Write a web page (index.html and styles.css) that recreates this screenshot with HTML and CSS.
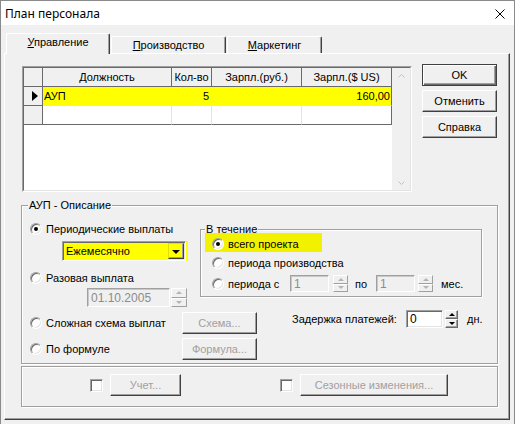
FILE: index.html
```html
<!DOCTYPE html>
<html lang="ru">
<head>
<meta charset="utf-8">
<title>План персонала</title>
<link rel="stylesheet" href="styles.css">
</head>
<body>
<div class="window">
  <div class="titlebar">
    <span class="title">План персонала</span>
    <svg class="close" width="10" height="10" viewBox="0 0 10 10"><path d="M0.5 0.5 L9.5 9.5 M9.5 0.5 L0.5 9.5" stroke="#000" stroke-width="1" fill="none"/></svg>
  </div>
  <div class="tabs">
    <div class="tab active t1"><span><u>У</u>правление</span></div>
    <div class="tab t2"><span><u>П</u>роизводство</span></div>
    <div class="tab t3"><span><u>М</u>аркетинг</span></div>
  </div>
  <div class="panel">
    <div class="toprow">
      <div class="grid">
        <div class="grid-in">
          <div class="grid-main">
            <div class="grow head">
              <div class="cell c0 ind"></div>
              <div class="cell c1 hc">Должность</div>
              <div class="cell c2 hc">Кол-во</div>
              <div class="cell c3 hc">Зарпл.(руб.)</div>
              <div class="cell c4 hc">Зарпл.($ US)</div>
            </div>
            <div class="grow sel">
              <div class="cell c0 ind"><span class="tri"></span></div>
              <div class="cell c1 dc">АУП</div>
              <div class="cell c2 dc num">5</div>
              <div class="cell c3 dc num"></div>
              <div class="cell c4 dc num last">160,00</div>
            </div>
            <div class="grow lastrow">
              <div class="cell c0 ind"></div>
              <div class="cell c1 dc"></div>
              <div class="cell c2 dc"></div>
              <div class="cell c3 dc"></div>
              <div class="cell c4 dc last"></div>
            </div>
          </div>
          <div class="vscroll">
            <svg width="7" height="4" viewBox="0 0 7 4"><polyline points="0.5,3.5 3.5,0.5 6.5,3.5" fill="none" stroke="#c2c2c2"/></svg>
            <svg width="7" height="4" viewBox="0 0 7 4"><polyline points="0.5,0.5 3.5,3.5 6.5,0.5" fill="none" stroke="#c2c2c2"/></svg>
          </div>
        </div>
      </div>
      <div class="buttons">
        <div class="btn def">OK</div>
        <div class="btn">Отменить</div>
        <div class="btn">Справка</div>
      </div>
    </div>

    <div class="group g1">
      <span class="glabel">АУП - Описание</span>
      <div class="rowA">
        <div class="leftA">
          <div class="ropt"><span class="radio on"></span><span>Периодические выплаты</span></div>
          <div class="combo"><span class="ctext">Ежемесячно</span><span class="cbtn"></span></div>
          <div class="ropt r2"><span class="radio"></span><span>Разовая выплата</span></div>
          <div class="daterow">
            <div class="field dis datef">01.10.2005</div>
            <div class="spin dis sp-date"><span class="sbtn up"></span><span class="sbtn down"></span></div>
          </div>
        </div>
        <div class="group during">
          <span class="glabel gl2">В течение</span>
          <div class="ropt hl"><span class="radio on"></span><span>всего проекта</span></div>
          <div class="ropt d2"><span class="radio"></span><span>периода производства</span></div>
          <div class="ropt d3">
            <span class="radio"></span><span class="plabel">периода с</span>
            <div class="field dis sf">1</div>
            <div class="spin dis sp-s1"><span class="sbtn up"></span><span class="sbtn down"></span></div>
            <span class="po">по</span>
            <div class="field dis sf">1</div>
            <div class="spin dis sp-s2"><span class="sbtn up"></span><span class="sbtn down"></span></div>
            <span class="mes">мес.</span>
          </div>
        </div>
      </div>
      <div class="rowB">
        <div class="leftB">
          <div class="brow b1"><div class="ropt wl"><span class="radio"></span><span>Сложная схема выплат</span></div><div class="btn dis">Схема...</div></div>
          <div class="brow b2"><div class="ropt wl"><span class="radio"></span><span>По формуле</span></div><div class="btn dis">Формула...</div></div>
        </div>
        <div class="delay">
          <span class="dlabel">Задержка платежей:</span>
          <div class="field df">0</div>
          <div class="spin sp-d"><span class="sbtn up"></span><span class="sbtn down"></span></div>
          <span class="dn">дн.</span>
        </div>
      </div>
    </div>

    <div class="group g2">
      <span class="check ck1"></span>
      <div class="btn dis b-uchet">Учет...</div>
      <span class="check ck2"></span>
      <div class="btn dis b-season">Сезонные изменения...</div>
    </div>
  </div>
</div>
</body>
</html>
```

FILE: styles.css
```css
* { box-sizing: border-box; }
html, body { margin: 0; padding: 0; }
body {
  background: #f0f0f0;
  font-family: "Liberation Sans", Arial, sans-serif;
  font-size: 11px;
  color: #000;
}
.window {
  width: 515px;
  height: 424px;
  border: 1px solid #8a8a8a;
  border-bottom: none;
  background: #f0f0f0;
  overflow: hidden;
}
.titlebar {
  height: 24px;
  background: #fff;
  display: flex;
  justify-content: space-between;
  align-items: flex-start;
}
.title {
  font-family: "Noto Sans", "Segoe UI", sans-serif;
  font-size: 12px;
  line-height: 17px;
  margin: 4px 0 0 4px;
}
.close { margin: 8px 9px 0 0; }

/* tabs */
.tabs {
  display: flex;
  align-items: flex-end;
  height: 20px;
  margin-top: 8px;
  padding-left: 5px;
}
.tab {
  height: 17px;
  margin-left: 1px;
  border-top: 1px solid #fff;
  border-left: 1px solid #fff;
  border-right: 1px solid #404040;
  box-shadow: inset -1px 0 #a0a0a0;
  border-radius: 2px 2px 0 0;
  display: flex;
  align-items: center;
  justify-content: center;
  line-height: 13px;
}
.tab u { text-underline-offset: 1px; }
.tab.t1 { width: 104px; margin-left: 0; }
.tab.t2 { width: 115px; }
.tab.t3 { width: 95px; }
.tab.active {
  height: 21px;
  margin-bottom: -1px;
  padding-bottom: 3px;
  background: #f0f0f0;
  position: relative;
  z-index: 1;
}

/* panel */
.panel {
  margin-left: 3px;
  width: 506px;
  height: 367px;
  border-top: 1px solid #fff;
  border-left: 1px solid #fff;
  border-right: 1px solid #404040;
  border-bottom: 1px solid #404040;
  box-shadow: inset -1px -1px #a0a0a0;
}
.toprow {
  display: flex;
  align-items: flex-start;
  margin: 10px 0 0 17px;
}

/* grid */
.grid {
  margin-top: 2px;
  width: 390px;
  height: 126px;
  border: 1px solid;
  border-color: #a0a0a0 #fff #fff #a0a0a0;
}
.grid-in {
  height: 100%;
  border: 1px solid;
  border-color: #696969 #e3e3e3 #e3e3e3 #696969;
  background: #fff;
  display: flex;
}
.grid-main { width: 368px; }
.grow { display: flex; height: 19px; }
.cell {
  height: 19px;
  border-right: 1px solid #e4e4e4;
  border-bottom: 1px solid #e4e4e4;
  display: flex;
  align-items: center;
  white-space: nowrap;
  overflow: hidden;
}
.c0 { width: 19px; }
.c1 { width: 129px; }
.c2 { width: 40px; }
.c3 { width: 90px; }
.c4 { width: 90px; }
.ind {
  background: #f0f0f0;
  border-right-color: #6a6a6a;
  border-bottom-color: #6a6a6a;
  justify-content: center;
}
.hc {
  background: #f0f0f0;
  border-right-color: #6a6a6a;
  border-bottom-color: #6a6a6a;
  justify-content: center;
}
.dc { padding-left: 1px; }
.num { justify-content: flex-end; padding-right: 2px; }
.c4.num { padding-right: 1px; }
.last { border-right-color: #6a6a6a; }
.sel .dc { background: #ffff00; border-color: #ffff00; }
.sel .c4 { border-right-color: #6a6a6a; }
.lastrow .cell { border-bottom-color: #6a6a6a; }
.tri {
  width: 0; height: 0;
  margin-left: 3px;
  border-left: 6px solid #000;
  border-top: 5px solid transparent;
  border-bottom: 5px solid transparent;
}
.vscroll {
  flex: 1;
  background: #f0f0f0;
  display: flex;
  flex-direction: column;
  justify-content: space-between;
  align-items: center;
  padding: 6px 0 5px 0;
}

/* buttons */
.buttons {
  display: flex;
  flex-direction: column;
  gap: 4px;
  margin-left: 10px;
}
.btn {
  width: 75px;
  height: 22px;
  background: #f0f0f0;
  border: 1px solid;
  border-color: #fff #404040 #404040 #fff;
  box-shadow: inset -1px -1px #a0a0a0;
  display: flex;
  align-items: center;
  justify-content: center;
  white-space: nowrap;
}
.btn.def {
  border: 1px solid #404040;
  box-shadow: inset 1px 1px #fff, inset -1px -1px #696969, inset -2px -2px #a0a0a0;
}
.btn.dis { color: #a0a0a0; }

/* groups */
.group {
  border: 1px solid #a0a0a0;
  box-shadow: 1px 1px 0 #fff, inset 1px 1px 0 #fff;
  display: flex;
  flex-direction: column;
}
.glabel {
  align-self: flex-start;
  height: 13px;
  line-height: 13px;
  margin: -7px 0 0 6px;
  padding: 0 1px;
  background: #f0f0f0;
}
.g1 {
  margin: 13px 0 0 16px;
  width: 477px;
  padding-bottom: 3px;
}
.rowA { display: flex; align-items: flex-start; margin-top: 9px; }
.leftA { width: 170px; margin-left: 8px; display: flex; flex-direction: column; flex: none; }
.ropt {
  display: flex;
  align-items: center;
  gap: 4px;
  height: 16px;
  white-space: nowrap;
}
.radio {
  width: 12px;
  height: 12px;
  flex: none;
  border-radius: 50%;
  background: #fff;
  border: 1px solid;
  border-color: #a0a0a0 #fff #fff #a0a0a0;
  box-shadow: inset 1px 1px #696969, inset -1px -1px #e3e3e3;
  display: flex;
  align-items: center;
  justify-content: center;
}
.radio.on::after {
  content: "";
  width: 4px;
  height: 4px;
  border-radius: 50%;
  background: #000;
}
.combo {
  margin: 4px 0 0 32px;
  width: 124px;
  height: 20px;
  background: #ffff00;
  border: 1px solid;
  border-color: #a0a0a0 #fff #fff #a0a0a0;
  box-shadow: inset 1px 1px #696969, inset -1px -1px #e3e3e3, 2px 0 0 #ffff00;
  display: flex;
  align-items: center;
  padding: 1px 1px 1px 3px;
}
.ctext { flex: 1; }
.cbtn {
  width: 16px;
  height: 16px;
  background: #ffff00;
  border: 1px solid;
  border-color: #e0e000 #404040 #404040 #e0e000;
  box-shadow: inset -1px -1px #a0a0a0;
  display: flex;
  align-items: center;
  justify-content: center;
}
.cbtn::after {
  content: "";
  border-left: 4px solid transparent;
  border-right: 4px solid transparent;
  border-top: 4px solid #000;
  margin-top: 1px;
}
.r2 { margin-top: 9px; }
.daterow { display: flex; margin: 2px 0 0 57px; height: 19px; }
.field {
  height: 100%;
  border: 1px solid;
  border-color: #a0a0a0 #fff #fff #a0a0a0;
  box-shadow: inset 1px 1px #696969, inset -1px -1px #e3e3e3;
  background: #fff;
  padding: 0 3px;
  display: flex;
  align-items: center;
  white-space: nowrap;
}
.field.dis { background: #f0f0f0; color: #8c8c8c; box-shadow: inset 1px 1px #c8c8c8; }
.datef { width: 83px; padding-left: 3px; font-size: 12px; }
.spin { display: flex; flex-direction: column; height: 100%; }
.sp-date { width: 16px; margin-left: 1px; }
.sbtn {
  flex: 1;
  background: #f0f0f0;
  border: 1px solid;
  border-color: #fff #696969 #696969 #fff;
  box-shadow: inset -1px -1px #a0a0a0;
  display: flex;
  align-items: center;
  justify-content: center;
}
.spin.dis .sbtn { border-color: #fff #a0a0a0 #a0a0a0 #fff; box-shadow: none; }
.up::after {
  content: "";
  border-left: 3px solid transparent;
  border-right: 3px solid transparent;
  border-bottom: 3px solid #000;
}
.down::after {
  content: "";
  border-left: 3px solid transparent;
  border-right: 3px solid transparent;
  border-top: 3px solid #000;
}
.spin.dis .up::after { border-bottom-color: #b4b4b4; }
.spin.dis .down::after { border-top-color: #b4b4b4; }

/* during box */
.during {
  margin-top: 8px;
  width: 282px;
  padding-bottom: 4px;
}
.gl2 { margin-left: 4px; }
.during .ropt { margin-left: 11px; }
.during .ropt.hl {
  margin-left: 4px;
  padding-left: 7px;
  width: 117px;
  background: #f2f200;
  box-shadow: 0 -3px 0 #f2f200;
}
.d2 { margin-top: 3px; }
.d3 { margin-top: 4px; height: 17px; gap: 0; }
.d3 .radio { margin-right: 4px; }
.plabel { width: 62px; }
.sf { width: 39px; font-size: 12px; }
.sp-s1 { width: 15px; margin-left: 4px; }
.po { margin-left: 7px; width: 21px; }
.sp-s2 { width: 15px; margin-left: 3px; }
.mes { margin-left: 8px; }

/* row B */
.rowB { display: flex; align-items: flex-start; margin-top: 3px; }
.leftB { margin-left: 8px; display: flex; flex-direction: column; }
.brow { display: flex; align-items: center; }
.b1 { margin-top: 2px; }
.b2 { margin-top: 4px; }
.ropt.wl { width: 152px; }
.delay { display: flex; align-items: center; height: 18px; margin-left: 35px; }
.dlabel { width: 114px; white-space: nowrap; }
.df { width: 37px; font-size: 12px; }
.sp-d { width: 13px; margin-left: 2px; }
.dn { margin-left: 9px; }

/* group 2 */
.g2 {
  flex-direction: row;
  align-items: center;
  margin: 2px 0 0 16px;
  width: 477px;
  padding: 7px 0 10px 0;
}
.check {
  width: 13px;
  height: 13px;
  flex: none;
  background: #fff;
  border: 1px solid;
  border-color: #a0a0a0 #fff #fff #a0a0a0;
  box-shadow: inset 1px 1px #696969, inset -1px -1px #e3e3e3;
}
.ck1 { margin-left: 68px; }
.b-uchet { width: 71px; margin-left: 7px; }
.ck2 { margin-left: 99px; }
.b-season { width: 148px; margin-left: 7px; }
```
